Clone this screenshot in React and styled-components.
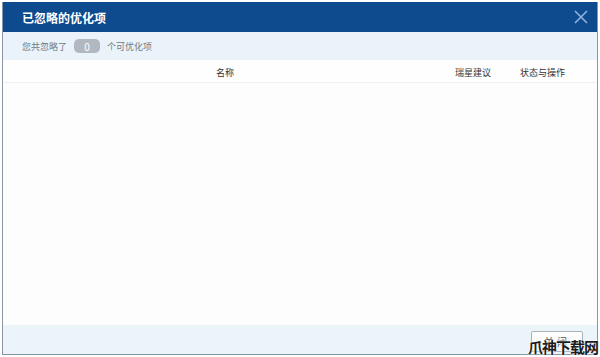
import React from "react";
import styled, { createGlobalStyle } from "styled-components";

const Global = createGlobalStyle`
  html, body { margin: 0; padding: 0; background: #ffffff; }
  body { font-family: "Noto Sans CJK SC", "Liberation Sans", sans-serif; }
`;

const Page = styled.div`
  width: 600px;
  height: 357px;
  padding: 2px 2px 2px 2px;
  box-sizing: border-box;
  position: relative;
  background: #fff;
`;

const Dialog = styled.div`
  height: 100%;
  display: flex;
  flex-direction: column;
  border: 1px solid #8a96a8;
  border-top: none;
  box-sizing: border-box;
  background: #fdfdfe;
`;

const TitleBar = styled.div`
  height: 30px;
  background: #0e4a8e;
  display: flex;
  align-items: center;
  justify-content: space-between;
  padding: 0 8px 0 19px;
  color: #fff;
`;

const Title = styled.div`
  font-size: 12px;
  font-weight: bold;
`;

const Close = styled.div`
  width: 16px;
  height: 16px;
  display: flex;
  align-items: center;
  justify-content: center;
`;

const Summary = styled.div`
  height: 28px;
  background: #eaf3fa;
  display: flex;
  align-items: center;
  padding-left: 19px;
  font-size: 9px;
  color: #707a86;
  gap: 5px;
`;

const Badge = styled.span`
  display: inline-flex;
  align-items: center;
  justify-content: center;
  width: 26px;
  height: 14px;
  border-radius: 5px;
  background: #b1b8c0;
  color: #fff;
  font-size: 10px;
  margin: 0 2px;
`;

const HeaderRow = styled.div`
  margin-top: 2px;
  height: 20px;
  display: grid;
  grid-template-columns: 444px 66px 1fr;
  align-items: center;
  border-bottom: 1px solid #eef1f4;
  background: #fefefe;
  font-size: 9px;
  color: #333;
`;

const HeadCell = styled.div`
  text-align: ${(p) => p.align || "center"};
  padding-left: ${(p) => p.pad || 0}px;
`;

const Body = styled.div`
  flex: 1;
  background: #fdfdfe;
`;

const Footer = styled.div`
  height: 29px;
  background: #eaf4f9;
  display: flex;
  align-items: center;
  justify-content: flex-end;
  padding-right: 14px;
`;

const Button = styled.div`
  width: 50px;
  height: 19px;
  border: 1px solid #a9b1ba;
  border-radius: 2px;
  background: linear-gradient(#ffffff, #f1f3f5);
  font-size: 10px;
  color: #555;
  display: flex;
  align-items: center;
  justify-content: center;
  letter-spacing: 3px;
  margin-top: 4px;
`;

const Watermark = styled.div`
  position: absolute;
  right: 2px;
  bottom: 0px;
  font-size: 15px;
  font-weight: bold;
  color: #1c1c1c;
  letter-spacing: -1px;
  text-shadow: 0 0 2px #fff, 0 0 2px #fff;
`;

export default function App() {
  return (
    <>
      <Global />
      <Page>
        <Dialog>
          <TitleBar>
            <Title>已忽略的优化项</Title>
            <Close>
              <svg width="14" height="14" viewBox="0 0 14 14">
                <path d="M1 1L13 13M13 1L1 13" stroke="#8fb4de" strokeWidth="1.6" />
              </svg>
            </Close>
          </TitleBar>
          <Summary>
            <span>您共忽略了</span>
            <Badge>0</Badge>
            <span>个可优化项</span>
          </Summary>
          <HeaderRow>
            <HeadCell>名称</HeadCell>
            <HeadCell align="left" pad={8}>瑞星建议</HeadCell>
            <HeadCell align="left" pad={7}>状态与操作</HeadCell>
          </HeaderRow>
          <Body />
          <Footer>
            <Button>关闭</Button>
          </Footer>
        </Dialog>
        <Watermark>爪神下载网</Watermark>
      </Page>
    </>
  );
}
